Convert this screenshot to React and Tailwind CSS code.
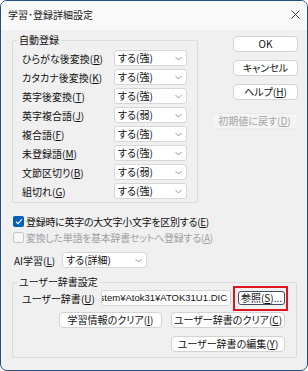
import React from 'react';

const FONT = "font-['Noto_Sans_CJK_JP','Noto_Sans_CJK_SC',sans-serif] [font-feature-settings:'palt']";

// label text with the access key underlined, e.g. "ひらがな後変換(R)"
const Label = ({ text, k, className = '' }) => (
  <span className={`whitespace-nowrap ${className}`}>
    {text}(<span className="underline underline-offset-[1px]">{k}</span>)
  </span>
);

const Chevron = () => (
  <svg width="7" height="5" viewBox="0 0 7 5" className="shrink-0">
    <path d="M0.5 1 L3.5 4 L6.5 1" fill="none" stroke="#8a8a8a" strokeWidth="0.9" />
  </svg>
);

const Select = ({ value, w }) => (
  <div
    className={`${w} h-[16px] bg-white border border-[#d6d6d6] rounded-[3px] flex items-center justify-between pl-[3px] pr-[4px] leading-none`}
  >
    <span>{value}</span>
    <Chevron />
  </div>
);

const Button = ({ children, w, disabled }) => (
  <div
    className={`${w} h-[16px] shrink-0 flex items-center justify-center rounded-[4px] border leading-none ${
      disabled ? 'bg-[#f4f4f4] border-[#ebebeb] text-[#a3a3a3]' : 'bg-white border-[#d3d3d3]'
    }`}
  >
    {children}
  </div>
);

const rows = [
  ['ひらがな後変換', 'R', 'する(強)'],
  ['カタカナ後変換', 'K', 'する(強)'],
  ['英字後変換', 'T', 'する(強)'],
  ['英字複合語', 'J', 'する(弱)'],
  ['複合語', 'F', 'する(強)'],
  ['未登録語', 'M', 'する(強)'],
  ['文節区切り', 'B', 'する(弱)'],
  ['組切れ', 'G', 'する(強)'],
];

export default function App() {
  return (
    <div
      className={`${FONT} w-[308px] h-[371px] border border-[#24507f] rounded-[7px] overflow-hidden flex flex-col text-[10px] text-[#111] bg-[#f0f0f0]`}
    >
      {/* Title bar */}
      <div className="h-[29px] shrink-0 bg-[#f9f9f9] flex items-start justify-between pl-[7px] pr-[7px] pt-[7px]">
        <span className="text-[10px] leading-[14px] text-[#1a1a1a]">学習･登録詳細設定</span>
        <svg width="9" height="9" viewBox="0 0 9 9" className="mt-[2px]">
          <path d="M0.5 0.5 L8.5 8.5 M8.5 0.5 L0.5 8.5" stroke="#2a2a2a" strokeWidth="0.9" />
        </svg>
      </div>

      {/* Body */}
      <div className="flex-1 pl-[11px] pr-[9px] flex flex-col">
        <div className="flex items-start justify-between">
          <fieldset className="w-[186px] mt-[3px] border border-[#dcdcdc] rounded-[2px]">
            <legend className="ml-[4px] px-[2px] leading-[14px]">自動登録</legend>
            <div className="pl-[9px] pr-[10px] pt-[3px] pb-[3px] flex flex-col gap-[3px]">
              {rows.map(([t, k, v]) => (
                <div key={t} className="h-[16px] flex items-center justify-between">
                  <Label text={t} k={k} />
                  <Select value={v} w="w-[73px]" />
                </div>
              ))}
            </div>
          </fieldset>

          <div className="w-[88px] mt-[6px] flex flex-col items-end gap-[8px]">
            <Button w="w-[65px]">OK</Button>
            <Button w="w-[65px]">キャンセル</Button>
            <Button w="w-[65px]">
              <Label text="ヘルプ" k="H" />
            </Button>
            <div className="mt-[5px]">
              <Button w="w-[87px]" disabled>
                <Label text="初期値に戻す" k="D" />
              </Button>
            </div>
          </div>
        </div>

        {/* Checkboxes */}
        <div className="mt-[11px] flex flex-col gap-[1px]">
          <div className="h-[15px] flex items-center gap-[2px]">
            <span className="ml-[1px] w-[11px] h-[11px] rounded-[2px] bg-[#005fb8] flex items-center justify-center">
              <svg width="8" height="7" viewBox="0 0 8 7">
                <path d="M1 3.6 L3 5.6 L7 1.2" fill="none" stroke="#fff" strokeWidth="1.2" />
              </svg>
            </span>
            <Label text="登録時に英字の大文字小文字を区別する" k="E" className="tracking-[-0.3px]" />
          </div>
          <div className="h-[15px] flex items-center gap-[2px] text-[#a0a0a0]">
            <span className="ml-[1px] w-[11px] h-[11px] rounded-[2px] border border-[#c8c8c8] bg-[#f7f7f7]" />
            <Label text="変換した単語を基本辞書セットへ登録する" k="A" className="tracking-[-0.3px]" />
          </div>
        </div>

        {/* AI learning */}
        <div className="mt-[7px] h-[16px] flex items-center">
          <Label text="AI学習" k="L" className="ml-[2px]" />
          <div className="ml-[7px]">
            <Select value="する(詳細)" w="w-[85px]" />
          </div>
        </div>

        {/* User dictionary */}
        <fieldset className="w-[285px] mt-[7px] border border-[#dcdcdc] rounded-[2px]">
          <legend className="ml-[4px] px-[2px] leading-[14px]">ユーザー辞書設定</legend>
          <div className="pl-[9px] pr-[11px] pb-[5px] flex flex-col">
            <div className="h-[18px] flex items-center">
              <Label text="ユーザー辞書" k="U" />
              <div className="ml-auto w-[130px] h-[16px] bg-white border border-[#d6d6d6] rounded-[2px] overflow-hidden flex items-center justify-end pr-[3px] whitespace-nowrap text-[9.5px] leading-none font-['Liberation_Sans','Noto_Sans_CJK_JP',sans-serif]">
                stem¥Atok31¥ATOK31U1.DIC
              </div>
              <div className="ml-[2px] -mr-[3px] -my-[4px] border-2 border-[#e0141e] pl-[3px] pr-[1px] pt-[3px] pb-[4px]">
                <div className="w-[47px] h-[14px] flex items-center justify-center rounded-[3px] border border-[#3f4b60] bg-white leading-none">
                  <span className="whitespace-nowrap">
                    参照(<span className="underline underline-offset-[1px]">S</span>)...
                  </span>
                </div>
              </div>
            </div>
            <div className="mt-[5px] flex justify-end gap-[9px]">
              <Button w="w-[103px]">
                <Label text="学習情報のクリア" k="I" />
              </Button>
              <Button w="w-[114px]">
                <Label text="ユーザー辞書のクリア" k="C" />
              </Button>
            </div>
            <div className="mt-[8px] flex justify-end">
              <Button w="w-[114px]">
                <Label text="ユーザー辞書の編集" k="Y" />
              </Button>
            </div>
          </div>
        </fieldset>
      </div>
    </div>
  );
}
